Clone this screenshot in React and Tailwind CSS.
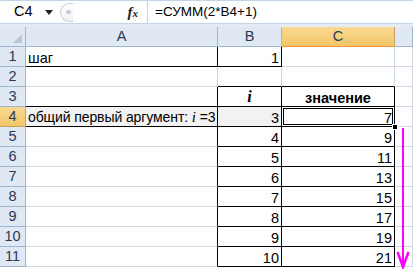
import React from "react";

const FONT = { fontFamily: '"Liberation Sans", Arial, sans-serif' };

const cols = ["A", "B", "C", ""];

const values = [
  { a: "шаг", b: "1", c: "" },
  { a: "", b: "", c: "" },
  { a: "", b: "i", c: "значение" },
  { a: "общий первый аргумент:", b: "3", c: "7" },
  { a: "", b: "4", c: "9" },
  { a: "", b: "5", c: "11" },
  { a: "", b: "6", c: "13" },
  { a: "", b: "7", c: "15" },
  { a: "", b: "8", c: "17" },
  { a: "", b: "9", c: "19" },
  { a: "", b: "10", c: "21" },
];

function Cell({ right, bottom, gray, align = "right", children, extra = "" }) {
  return (
    <div
      className={
        "relative h-[20px] border-r border-b flex items-end pb-[1px] px-[2px] text-[14.5px] text-black leading-none " +
        (right ? "border-r-black " : "border-r-[#d0d7e5] ") +
        (bottom ? "border-b-black " : "border-b-[#d0d7e5] ") +
        (gray ? "bg-[#f2f2f2] " : "bg-white ") +
        (align === "right" ? "justify-end " : align === "center" ? "justify-center " : "justify-start ") +
        extra
      }
    >
      {children}
    </div>
  );
}

export default function App() {
  return (
    <div className="w-[413px] h-[269px] overflow-hidden bg-white relative" style={FONT}>
      {/* formula bar */}
      <div className="h-[23px] flex border-t border-[#c5d3e6] bg-white">
        <div className="w-[60px] flex items-center pl-[14px] text-[14.5px] text-black">
          <span>C4</span>
          <svg width="8" height="5" viewBox="0 0 8 5" className="ml-[12px] mt-[1px]">
            <path d="M0 0h8L4 5z" fill="#222" />
          </svg>
        </div>
        <div className="w-[87px] flex items-center relative">
          <div className="w-[13px] h-[19px] rounded-l-full border border-r-0 border-[#c9d1dc] bg-gradient-to-b from-white to-[#eef1f5] flex items-center justify-center">
            <div className="w-[5px] h-[4px] rounded-full bg-[#c4cad3] ml-[2px]" />
          </div>
          <div className="flex-1" />
          <span className="italic font-bold text-[15px] text-[#222] mr-[9px]" style={{ fontFamily: '"Liberation Serif", serif' }}>
            f<span className="text-[11px]">x</span>
          </span>
        </div>
        <div className="flex-1 border-l border-[#c5d3e6] flex items-center pl-[7px] text-[13.5px] text-black">
          =СУММ(2*B4+1)
        </div>
      </div>
      <div className="h-[4px] bg-[#e4ebf4] border-t border-[#c5d3e6]" />

      {/* sheet */}
      <div className="grid grid-cols-[26px_192px_64px_113px_18px]">
        {/* header row */}
        <div className="h-[20px] bg-[#dfe8f3] border-r border-b border-[#9eb6ce] relative">
          <svg width="9" height="9" viewBox="0 0 9 9" className="absolute right-[3px] bottom-[3px]">
            <path d="M9 0V9H0z" fill="#b9c6d6" />
          </svg>
        </div>
        {cols.map((c) => (
          <div
            key={c || "d"}
            className={
              "h-[20px] border-r border-b flex items-center justify-center text-[14.5px] " +
              (c === "C"
                ? "bg-gradient-to-b from-[#f9da92] to-[#f3c567] border-r-[#c8a060] border-b-[#f29536] text-[#2a3a54]"
                : "bg-[#dfe8f3] border-[#9eb6ce] text-[#2a3a54]")
            }
          >
            {c}
          </div>
        ))}

        {values.map((r, i) => {
          const n = i + 1;
          const sel = n === 4;
          return (
            <React.Fragment key={n}>
              <div
                className={
                  "h-[20px] border-r border-b flex items-center justify-center text-[14.5px] text-[#2a3a54] " +
                  (sel
                    ? "bg-gradient-to-b from-[#f9da92] to-[#f3c567] border-r-[#f29536] border-b-[#c8a060]"
                    : "bg-[#dfe8f3] border-r-[#9eb6ce] border-b-[#9eb6ce]")
                }
              >
                {n}
              </div>
              <Cell
                align="left"
                right={n === 1 || n >= 3}
                bottom={n === 1 || n === 3 || n === 4}
                gray={n === 4}
              >
                {n === 4 ? (
                  <span className="whitespace-nowrap text-[14px] tracking-[-0.1px]">
                    {r.a}{" "}
                    <span className="italic text-[15px]" style={{ fontFamily: '"Liberation Serif", serif' }}>
                      i
                    </span>
                    {" =3"}
                  </span>
                ) : (
                  r.a
                )}
              </Cell>
              <Cell
                right={n === 1 || n >= 3}
                bottom={n === 1 || n >= 2}
                gray={n === 4}
                align={n === 3 ? "center" : "right"}
              >
                {n === 3 ? (
                  <span className="italic font-bold text-[16px]" style={{ fontFamily: '"Liberation Serif", serif' }}>
                    i
                  </span>
                ) : (
                  r.b
                )}
              </Cell>
              <Cell
                right={n >= 3}
                bottom={n >= 2}
                align={n === 3 ? "center" : "right"}
              >
                {n === 3 ? <span className="font-bold">{r.c}</span> : r.c}
                {sel && (
                  <>
                    <div className="absolute inset-[1px] border-[1.5px] border-black pointer-events-none" />
                    <div className="absolute right-[-4px] bottom-[-4px] w-[6px] h-[6px] bg-black border border-white z-10" />
                  </>
                )}
              </Cell>
              <Cell />
            </React.Fragment>
          );
        })}
      </div>

      {/* magenta arrow */}
      <svg
        className="absolute left-[396px] top-[127px]"
        width="17"
        height="142"
        viewBox="0 0 17 142"
      >
        <line x1="7" y1="1" x2="7" y2="139" stroke="#ff00ff" strokeWidth="2" />
        <path d="M1.5 125 L7 140 L12.5 125" fill="none" stroke="#ff00ff" strokeWidth="2.5" />
      </svg>
    </div>
  );
}
